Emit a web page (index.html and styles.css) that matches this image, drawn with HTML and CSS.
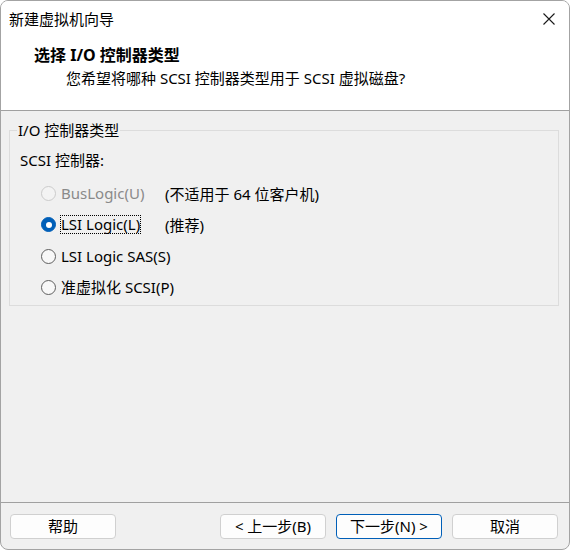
FILE: index.html
```html
<!DOCTYPE html>
<html lang="zh-CN">
<head>
<meta charset="utf-8">
<title>新建虚拟机向导</title>
<link rel="stylesheet" href="styles.css">
</head>
<body>
<div class="window">
  <div class="titlebar">
    <span class="title">新建虚拟机向导</span>
    <span class="close">
      <svg width="12" height="12" viewBox="0 0 12 12"><path d="M0.5 0.5 L11.5 11.5 M11.5 0.5 L0.5 11.5" stroke="#1a1a1a" stroke-width="1.1" fill="none"/></svg>
    </span>
  </div>
  <div class="header">
    <div class="heading">选择 I/O 控制器类型</div>
    <div class="subtitle">您希望将哪种 SCSI 控制器类型用于 SCSI 虚拟磁盘?</div>
  </div>
  <div class="body">
    <fieldset class="group">
      <legend>I/O 控制器类型</legend>
      <div class="group-label">SCSI 控制器:</div>
      <div class="options">
        <div class="option disabled"><span class="radio"></span><span class="label">BusLogic(U)</span><span class="note">(不适用于 64 位客户机)</span></div>
        <div class="option checked"><span class="radio"></span><span class="label focus">LSI Logic(L)</span><span class="note">(推荐)</span></div>
        <div class="option"><span class="radio"></span><span class="label">LSI Logic SAS(S)</span></div>
        <div class="option"><span class="radio"></span><span class="label">准虚拟化 SCSI(P)</span></div>
      </div>
    </fieldset>
  </div>
  <div class="footer">
    <button class="btn">帮助</button>
    <div class="nav">
      <button class="btn">&lt; 上一步(B)</button>
      <button class="btn default">下一步(N) &gt;</button>
      <button class="btn">取消</button>
    </div>
  </div>
</div>
</body>
</html>
```

FILE: styles.css
```css
* { box-sizing: border-box; }
html, body {
  margin: 0;
  padding: 0;
  background: #ffffff;
}
body {
  font-family: "Noto Sans", "Noto Sans CJK SC", sans-serif;
  font-size: 15px;
  color: #000;
}
.window {
  width: 570px;
  height: 550px;
  border: 1px solid #a3a3a3;
  border-radius: 8px;
  overflow: hidden;
  display: flex;
  flex-direction: column;
  background: #f0f0f0;
}
.titlebar {
  height: 36px;
  background: #fff;
  display: flex;
  align-items: center;
  justify-content: space-between;
  padding: 0 14px 0 8px;
}
.title { line-height: 20px; }
.close { display: flex; width: 12px; height: 12px; }
.header {
  height: 74px;
  background: #fff;
  border-bottom: 1px solid #a0a0a0;
  padding: 8px 0 0 0;
}
.heading {
  font-weight: bold;
  font-size: 16px;
  line-height: 20px;
  padding-left: 33px;
}
.subtitle {
  line-height: 20px;
  margin-top: 3px;
  padding-left: 65px;
}
.body {
  flex: 1;
  padding: 9px 10px 0 8px;
}
.group {
  margin: 0;
  padding: 0 0 2px 0;
  border: 1px solid #dcdcdc;
  width: 550px;
}
.group legend {
  margin-left: 7px;
  padding: 0 1px;
  line-height: 20px;
}
.group-label {
  line-height: 20px;
  margin-top: 10px;
  padding-left: 10px;
}
.options {
  margin-top: 8px;
  display: flex;
  flex-direction: column;
}
.option {
  height: 31.33px;
  display: grid;
  grid-template-columns: 15px 101px auto;
  column-gap: 4px;
  align-items: center;
  padding-left: 31px;
}
.radio {
  width: 15px;
  height: 15px;
  border-radius: 50%;
  border: 1px solid #5f5f5f;
  background: #f8f8f8;
  display: flex;
  align-items: center;
  justify-content: center;
}
.option.disabled .radio {
  border-color: #cbcbcb;
  background: #f3f3f3;
}
.option.checked .radio {
  border-color: #005fb8;
  background: #005fb8;
}
.option.checked .radio::after {
  content: "";
  width: 6px;
  height: 6px;
  border-radius: 50%;
  background: #fff;
}
.label {
  justify-self: start;
  white-space: nowrap;
  border: 1px solid transparent;
  line-height: 17px;
}
.label.focus { border: 1px dotted #000; }
.option.disabled .label { color: #8a8a8a; }
.note { white-space: nowrap; }
.footer {
  height: 47px;
  border-top: 1px solid #a0a0a0;
  display: flex;
  justify-content: space-between;
  padding: 11px 11px 0 9px;
}
.nav {
  display: flex;
  gap: 10px;
}
.btn {
  width: 106px;
  height: 25px;
  border: 1px solid #d0d0d0;
  border-radius: 4px;
  background: #fdfdfd;
  font-family: inherit;
  font-size: 15px;
  color: #000;
  padding: 0;
  line-height: 23px;
}
.btn.default { border-color: #005fb8; }
```
